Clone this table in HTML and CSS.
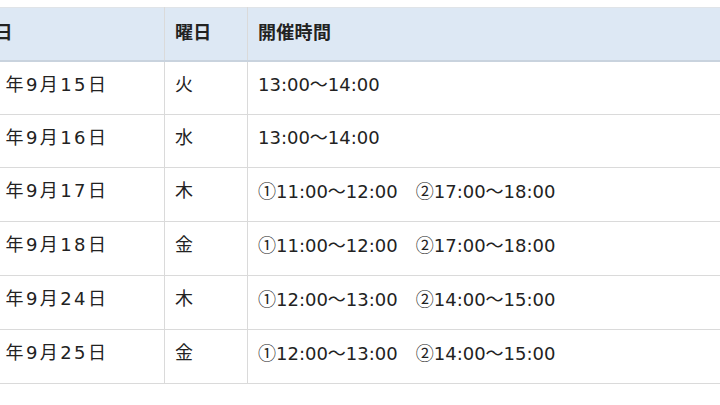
FILE: index.html
```html
<!DOCTYPE html>
<html lang="ja">
<head>
<meta charset="utf-8">
<link rel="stylesheet" href="styles.css">
</head>
<body>
<table class="schedule">
  <thead>
    <tr>
      <th class="col-date">開催日</th>
      <th class="col-day">曜日</th>
      <th class="col-time">開催時間</th>
    </tr>
  </thead>
  <tbody>
    <tr><td class="date">2020 年9月15日</td><td>火</td><td>13:00～14:00</td></tr>
    <tr><td class="date">2020 年9月16日</td><td>水</td><td>13:00～14:00</td></tr>
    <tr><td class="date">2020 年9月17日</td><td>木</td><td><span class="circ">①</span>11:00～12:00　<span class="circ">②</span>17:00～18:00</td></tr>
    <tr><td class="date">2020 年9月18日</td><td>金</td><td><span class="circ">①</span>11:00～12:00　<span class="circ">②</span>17:00～18:00</td></tr>
    <tr><td class="date">2020 年9月24日</td><td>木</td><td><span class="circ">①</span>12:00～13:00　<span class="circ">②</span>14:00～15:00</td></tr>
    <tr><td class="date">2020 年9月25日</td><td>金</td><td><span class="circ">①</span>12:00～13:00　<span class="circ">②</span>14:00～15:00</td></tr>
  </tbody>
</table>
</body>
</html>
```
FILE: styles.css
```css
html, body {
  margin: 0;
  padding: 0;
  background: #ffffff;
  overflow: hidden;
}
body {
  width: 720px;
  height: 405px;
  font-family: "DejaVu Sans", "Noto Sans CJK JP", sans-serif;
  color: #222222;
}
.schedule {
  border-collapse: collapse;
  margin: 7px 0 0 -62px;
  width: 830px;
  table-layout: fixed;
  font-size: 18px;
}
.schedule th,
.schedule td {
  text-align: left;
  vertical-align: top;
  border: 1px solid #dadada;
  padding: 9px 10px 16px;
  line-height: 27px;
  white-space: nowrap;
}
.schedule th {
  background: #dde8f4;
  font-weight: bold;
  font-family: "Noto Sans CJK JP", sans-serif;
  font-size: 18px;
  letter-spacing: 0.3px;
  border-top-color: #e0e4e8;
  border-bottom: 2px solid #c9d3de;
  padding-top: 10px;
  padding-bottom: 15px;
}
.schedule th.col-date {
  padding-left: 19px;
  width: 196px;
}
.col-day { width: 62px; }
.col-time { width: auto; }
.schedule td.date {
  letter-spacing: 2.4px;
  padding-left: 3px;
}
.circ {
  font-family: "Noto Sans CJK JP", sans-serif;
}
```
